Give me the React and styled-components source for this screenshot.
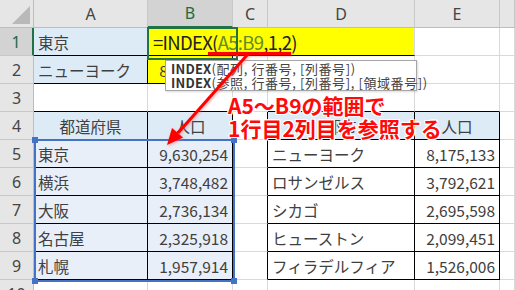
import React from "react"
import styled, { createGlobalStyle } from "styled-components"

const GlobalStyle = createGlobalStyle`
  html, body {
    margin: 0;
    padding: 0;
    background: #fff;
    overflow: hidden;
  }
  body {
    font-family: "Noto Sans CJK JP", "Noto Sans", sans-serif;
  }
`

const Sheet = styled.div`
  position: relative;
  display: grid;
  grid-template-columns: 34px 114px 85px 35px 147px 85px 15px;
  grid-auto-rows: 28px;
  width: 515px;
  height: 290px;
  overflow: hidden;
  box-sizing: border-box;
  * {
    box-sizing: border-box;
  }
`

const Corner = styled.div`
  position: relative;
  background: #e6e6e6;
  border-right: 1px solid #bdbdbd;
  border-bottom: 1px solid #bdbdbd;
  &::after {
    content: "";
    position: absolute;
    right: 3px;
    bottom: 3px;
    width: 0;
    height: 0;
    border-left: 18px solid transparent;
    border-bottom: 18px solid #b9b9b9;
  }
`

const ColHead = styled.div`
  display: flex;
  align-items: center;
  justify-content: center;
  background: ${p => (p.$active ? "#d3d3d3" : "#e6e6e6")};
  color: ${p => (p.$active ? "#1e6b3f" : "#444")};
  border-right: 1px solid #c8c8c8;
  border-bottom: ${p => (p.$active ? "2px solid #217346" : "1px solid #bdbdbd")};
  font-family: "Noto Sans", sans-serif;
  font-size: 16px;
`

const RowHead = styled.div`
  display: flex;
  align-items: center;
  justify-content: center;
  background: ${p => (p.$active ? "#d3d3d3" : "#e6e6e6")};
  color: ${p => (p.$active ? "#1e6b3f" : "#444")};
  border-right: ${p => (p.$active ? "2px solid #217346" : "1px solid #bdbdbd")};
  border-bottom: 1px solid #c8c8c8;
  font-family: "Noto Sans", sans-serif;
  font-size: 16px;
`

const alignMap = {left: "flex-start", center: "center", right: "flex-end"}

const Cell = styled.div`
  display: flex;
  align-items: center;
  justify-content: ${p => alignMap[p.$align || "left"]};
  padding: 0 4px;
  background: ${p => p.$bg || "#fff"};
  border-right: 1px solid ${p => (p.$edgeR ? "#000" : "#d9d9d9")};
  border-bottom: 1px solid ${p => (p.$edgeB ? "#000" : "#d9d9d9")};
  color: #404040;
  font-size: 15.5px;
  white-space: nowrap;
  overflow: hidden;
`

const EditCell = styled.div`
  grid-column: span 3;
  position: relative;
  display: flex;
  align-items: center;
  padding-left: 5px;
  background: #ffff00;
  border-right: 1px solid #d9d9d9;
  border-bottom: 1px solid #000;
  font-size: 18.5px;
  letter-spacing: -0.7px;
  color: #222;
  white-space: nowrap;
  &::before {
    content: "";
    position: absolute;
    left: -1px;
    top: -1px;
    width: 87px;
    height: 29px;
    border: 2px solid #217346;
  }
`

const Ref = styled.span`
  color: #648a26;
`

const RefFrame = styled.div`
  position: absolute;
  left: 34px;
  top: 139px;
  width: 201px;
  height: 143px;
  border: 2px solid #4472c4;
  pointer-events: none;
`

const Handle = styled.span`
  position: absolute;
  width: 6px;
  height: 6px;
  background: #4472c4;
  ${p => (p.$top ? "top: -4px;" : "bottom: -4px;")}
  ${p => (p.$left ? "left: -4px;" : "right: -4px;")}
`

const Tooltip = styled.div`
  position: absolute;
  left: 165px;
  top: 60px;
  width: 252px;
  height: 31px;
  padding: 1px 4px 0 5px;
  background: #fff;
  border: 1px solid #a6a6a6;
  box-shadow: 1px 1px 2px rgba(0, 0, 0, 0.15);
  color: #444;
  font-size: 13px;
  line-height: 14px;
  letter-spacing: 0.6px;
  white-space: nowrap;
  b {
    color: #333;
    font-weight: 700;
    letter-spacing: 0.2px;
  }
`

const Note = styled.div`
  position: absolute;
  left: 228px;
  top: 94px;
  color: #ff0a0a;
  font-size: 21px;
  font-weight: 700;
  line-height: 22.5px;
  white-space: nowrap;
  text-shadow: -1px -1px 0 #fff, 1px -1px 0 #fff, -1px 1px 0 #fff, 1px 1px 0 #fff,
    0 1px 0 #fff, 0 -1px 0 #fff, 1px 0 0 #fff, -1px 0 0 #fff;
`

const Marks = styled.svg`
  position: absolute;
  left: 0;
  top: 0;
  pointer-events: none;
  filter: drop-shadow(1px 1px 1.5px rgba(255, 90, 90, 0.55));
`

const BLUE = "#ddebf7"
const PALE = "#e8eff8"
const YELLOW = "#ffff00"

const cols = ["A", "B", "C", "D", "E", ""]

// cells per row: [text, props]
const rows = [
  null, // row 1 handled separately
  [
    ["ニューヨーク", {$bg: BLUE, $edgeR: true, $edgeB: true}],
    ["8,175,133", {$bg: YELLOW, $edgeR: true, $edgeB: true, $align: "right"}],
    ["", {}],
    ["", {}],
    ["", {}],
    ["", {}],
  ],
  [
    ["", {$edgeB: true}],
    ["", {$edgeB: true}],
    ["", {}],
    ["", {$edgeB: true}],
    ["", {$edgeB: true}],
    ["", {}],
  ],
  [
    ["都道府県", {$bg: BLUE, $edgeR: true, $edgeB: true, $align: "center"}],
    ["人口", {$bg: BLUE, $edgeR: true, $edgeB: true, $align: "center"}],
    ["", {$edgeR: true}],
    ["都市", {$bg: BLUE, $edgeR: true, $edgeB: true, $align: "center"}],
    ["人口", {$bg: BLUE, $edgeR: true, $edgeB: true, $align: "center"}],
    ["", {}],
  ],
]

const data = [
  ["東京", "9,630,254", "ニューヨーク", "8,175,133"],
  ["横浜", "3,748,482", "ロサンゼルス", "3,792,621"],
  ["大阪", "2,736,134", "シカゴ", "2,695,598"],
  ["名古屋", "2,325,918", "ヒューストン", "2,099,451"],
  ["札幌", "1,957,914", "フィラデルフィア", "1,526,006"],
]

data.forEach(([pref, pop, city, cityPop]) => {
  rows.push([
    [pref, {$bg: PALE, $edgeR: true, $edgeB: true}],
    [pop, {$bg: PALE, $edgeR: true, $edgeB: true, $align: "right"}],
    ["", {$edgeR: true}],
    [city, {$edgeR: true, $edgeB: true}],
    [cityPop, {$edgeR: true, $edgeB: true, $align: "right"}],
    ["", {}],
  ])
})

rows.push(cols.map(() => ["", {}]))

const App = () => {
  return (
    <>
      <GlobalStyle />
      <Sheet>
        <Corner />
        {cols.map((c, i) => (
          <ColHead key={i} $active={c === "B"}>
            {c}
          </ColHead>
        ))}

        <RowHead $active>1</RowHead>
        <Cell $bg={BLUE} $edgeR $edgeB>
          東京
        </Cell>
        <EditCell>
          =INDEX(<Ref>A5:B9</Ref>,1,2)
        </EditCell>
        <Cell />
        <Cell />

        {rows.slice(1).map((row, r) => (
          <React.Fragment key={r}>
            <RowHead>{r + 2}</RowHead>
            {row.map(([text, props], c) => (
              <Cell key={c} {...props}>
                {text}
              </Cell>
            ))}
          </React.Fragment>
        ))}

        <RefFrame>
          <Handle $top $left />
          <Handle $top />
          <Handle $left />
          <Handle />
        </RefFrame>

        <Tooltip>
          <div>
            <b>INDEX</b>(配列, 行番号, [列番号])
          </div>
          <div>
            <b>INDEX</b>(参照, 行番号, [列番号], [領域番号])
          </div>
        </Tooltip>

        <Note>
          A5～B9の範囲で
          <br />
          1行目2列目を参照する
        </Note>

        <Marks width="515" height="290" viewBox="0 0 515 290">
          <line x1="208" y1="53.5" x2="291" y2="53.5" stroke="#ff0000" strokeWidth="3" />
          <line x1="248" y1="54" x2="178" y2="133" stroke="#ff0000" strokeWidth="3" />
          <polygon points="167,145 183,137.5 172,128" fill="#ff0000" />
        </Marks>
      </Sheet>
    </>
  )
}

export default App
